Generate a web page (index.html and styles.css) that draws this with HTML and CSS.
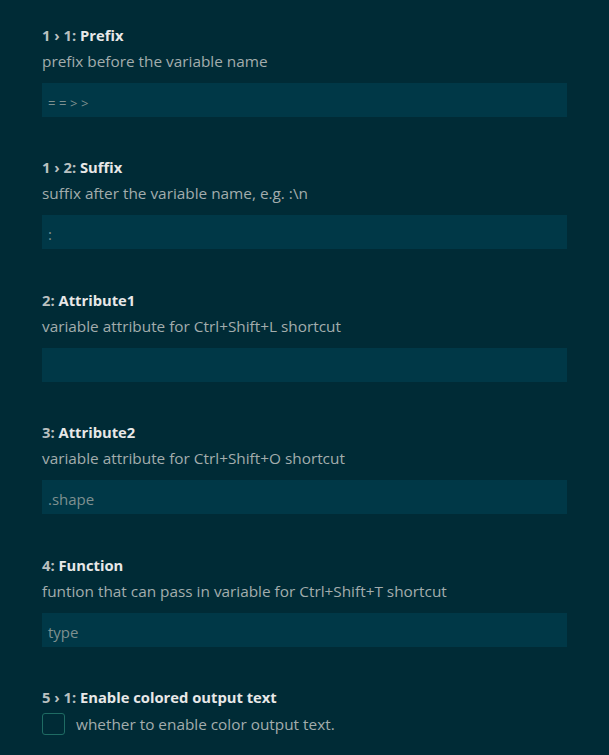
FILE: index.html
```html
<!DOCTYPE html>
<html>
<head>
<meta charset="utf-8">
<link rel="stylesheet" href="styles.css">
</head>
<body>
<div class="list">
  <div class="item">
    <div class="title"><span class="cat">1 › 1: </span><span class="label">Prefix</span></div>
    <div class="desc">prefix before the variable name</div>
    <div class="input"><span class="spaced">==&gt;&gt;</span></div>
  </div>
  <div class="item">
    <div class="title"><span class="cat">1 › 2: </span><span class="label">Suffix</span></div>
    <div class="desc">suffix after the variable name, e.g. :\n</div>
    <div class="input">:</div>
  </div>
  <div class="item">
    <div class="title"><span class="cat">2: </span><span class="label">Attribute1</span></div>
    <div class="desc">variable attribute for Ctrl+Shift+L shortcut</div>
    <div class="input"></div>
  </div>
  <div class="item">
    <div class="title"><span class="cat">3: </span><span class="label">Attribute2</span></div>
    <div class="desc">variable attribute for Ctrl+Shift+O shortcut</div>
    <div class="input">.shape</div>
  </div>
  <div class="item">
    <div class="title"><span class="cat">4: </span><span class="label">Function</span></div>
    <div class="desc">funtion that can pass in variable for Ctrl+Shift+T shortcut</div>
    <div class="input">type</div>
  </div>
  <div class="item last">
    <div class="title"><span class="cat">5 › 1: </span><span class="label">Enable colored output text</span></div>
    <div class="check-row">
      <span class="checkbox"></span>
      <span class="check-text">whether to enable color output text.</span>
    </div>
  </div>
</div>
</body>
</html>
```
FILE: styles.css
```css
html, body {
  margin: 0;
  padding: 0;
  background: #002b36;
}
body {
  font-family: "Open Sans", "Noto Sans", sans-serif;
  font-size: 15px;
  color: #a3adad;
}
.list {
  padding: 25px 42px 0 42px;
  width: 525px;
}
.item {
  padding-bottom: 40.4px;
}
.title {
  line-height: 20px;
  font-weight: 700;
  font-size: 14.75px;
}
.cat {
  color: #b9c0c0;
}
.label {
  color: #e8e8e8;
}
.desc {
  margin-top: 6px;
  line-height: 20px;
  color: #a3adad;
  font-size: 15.35px;
}
.input {
  margin-top: 12px;
  height: 34px;
  background: #003847;
  color: #7e9090;
  line-height: 30px;
  padding: 4px 6px 0 6px;
  box-sizing: border-box;
}
.spaced {
  letter-spacing: 3.6px;
  font-size: 13px;
}
.check-row {
  display: flex;
  align-items: center;
  gap: 11px;
  margin-top: 6px;
}
.checkbox {
  width: 21px;
  height: 20px;
  border: 1px solid #1f6b63;
  border-radius: 3px;
  background: #002b36;
}
.check-text {
  line-height: 22px;
  color: #a3adad;
  font-size: 15.35px;
}
```
